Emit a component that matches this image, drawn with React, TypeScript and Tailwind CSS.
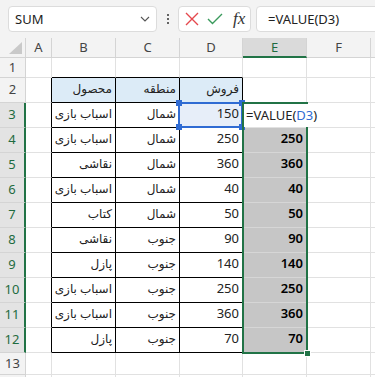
import React from "react";

const COLS = ["A", "B", "C", "D", "E", "F", "G"];

const rows: string[][] = [
  ["", "", "", "", "", ""],
  ["", "محصول", "منطقه", "فروش", "", ""],
  ["", "اسباب بازی", "شمال", "150", "", ""],
  ["", "اسباب بازی", "شمال", "250", "250", ""],
  ["", "نقاشی", "شمال", "360", "360", ""],
  ["", "اسباب بازی", "شمال", "40", "40", ""],
  ["", "کتاب", "شمال", "50", "50", ""],
  ["", "نقاشی", "جنوب", "90", "90", ""],
  ["", "پازل", "جنوب", "140", "140", ""],
  ["", "اسباب بازی", "جنوب", "250", "250", ""],
  ["", "اسباب بازی", "جنوب", "360", "360", ""],
  ["", "پازل", "جنوب", "70", "70", ""],
  ["", "", "", "", "", ""],
  ["", "", "", "", "", ""],
];

function cellClass(r: number, c: number): string {
  const inTable = r >= 2 && r <= 12 && c >= 1 && c <= 3;
  const persian = c === 1 || c === 2 || (r === 2 && c === 3);
  const classes: string[] = [
    "flex items-start justify-end pr-[3px] whitespace-nowrap leading-[20px] text-[#222]",
    "font-['Noto_Sans','DejaVu_Sans',sans-serif]",
    "border-r border-b",
  ];
  classes.push(persian ? "text-[12px] pt-[1px]" : "text-[13px]");
  if (inTable || (c === 0 && r >= 2 && r <= 12)) classes.push("border-r-black");
  else classes.push("border-r-[#e1e1e1]");
  if (inTable || (r === 1 && c >= 1 && c <= 3)) classes.push("border-b-black");
  else if (c === 4 && r >= 4 && r <= 11) classes.push("border-b-[#d6d6d6]");
  else classes.push("border-b-[#e1e1e1]");
  if (r === 2 && inTable) classes.push("bg-[#dcebf7]");
  else if (r === 3 && c === 3) classes.push("bg-[#e7eef9]");
  else if (c === 4 && r >= 4 && r <= 12) classes.push("bg-[#c6c6c6] text-black font-semibold");
  else classes.push("bg-white");
  return classes.join(" ");
}

export default function App() {
  return (
    <div className="w-[375px] h-[377px] overflow-hidden bg-[#f3f3f3] font-['Noto_Sans',sans-serif]">
      {/* Formula bar */}
      <div className="h-[38px] flex items-start pt-[6px] pl-[8px]">
        <div className="w-[149px] h-[26px] bg-white border border-[#dcdcdc] rounded-[4px] flex items-center pl-[6px] pr-[5px]">
          <span className="text-[13px] text-[#222] flex-1 leading-none">SUM</span>
          <svg width="10" height="6" viewBox="0 0 10 6" className="mr-[1px]">
            <path d="M1 1 L5 5 L9 1" fill="none" stroke="#555" strokeWidth="1.1" />
          </svg>
        </div>
        <div className="w-[21px] h-[26px] flex flex-col items-center justify-center gap-[2px]">
          <span className="w-[2px] h-[2px] rounded-full bg-[#333]" />
          <span className="w-[2px] h-[2px] rounded-full bg-[#333]" />
          <span className="w-[2px] h-[2px] rounded-full bg-[#333]" />
        </div>
        <div className="w-[73px] h-[26px] bg-white border border-[#dcdcdc] rounded-[4px] flex items-center pl-[5px]">
          <svg width="14" height="14" viewBox="0 0 14 14" className="ml-[1px]">
            <path d="M1 1 L13 13 M13 1 L1 13" stroke="#e5484d" strokeWidth="1.4" fill="none" />
          </svg>
          <svg width="16" height="12" viewBox="0 0 16 12" className="ml-[8px]">
            <path d="M1 6 L5.5 10.5 L15 1" stroke="#3a9a5c" strokeWidth="1.4" fill="none" />
          </svg>
          <span className="ml-[10px] text-[17px] leading-none italic text-[#333] font-['Liberation_Serif',serif] -mt-[2px]">
            fx
          </span>
        </div>
        <div className="ml-[5px] flex-1 -mr-[10px] h-[26px] bg-white border border-[#dcdcdc] rounded-[4px] flex items-center pl-[11px]">
          <span className="text-[13px] text-[#222] leading-none">=VALUE(D3)</span>
        </div>
      </div>

      {/* Sheet */}
      <div className="relative h-[339px] overflow-hidden">
        <div className="grid w-max grid-cols-[26px_26px_64px_64px_63px_64px_64px_64px] grid-rows-[20px_20px_repeat(11,25px)_22px_22px]">
          <div className="bg-[#f3f3f3] border-r border-b border-[#d4d4d4] flex items-end justify-end pr-[3px] pb-[3px]">
            <svg width="13" height="12" viewBox="0 0 13 12">
              <path d="M13 0 L13 12 L0 12 Z" fill="#c9c9c9" />
            </svg>
          </div>
          {COLS.map((c) =>
            c === "E" ? (
              <div
                key={c}
                className="bg-[#dadada] border-r border-r-[#d4d4d4] border-b-2 border-b-[#217346] flex items-center justify-center text-[13px] text-[#1e6b40] pt-[2px]"
              >
                {c}
              </div>
            ) : (
              <div
                key={c}
                className="bg-[#f3f3f3] border-r border-b border-[#d4d4d4] flex items-center justify-center text-[13px] text-[#444] pt-[1px]"
              >
                {c}
              </div>
            )
          )}
          {rows.map((row, i) => {
            const r = i + 1;
            const sel = r >= 3 && r <= 12;
            return (
              <React.Fragment key={r}>
                {sel ? (
                  <div className="bg-[#e3e3e3] border-r-2 border-r-[#217346] border-b border-b-[#d4d4d4] flex items-center justify-center text-[13px] text-[#1e6b40]">
                    {r}
                  </div>
                ) : (
                  <div className="bg-[#f3f3f3] border-r border-b border-[#d4d4d4] flex items-center justify-center text-[13px] text-[#444]">
                    {r}
                  </div>
                )}
                {[0, 1, 2, 3, 4, 5, 6].map((c) => (
                  <div key={c} className={cellClass(r, c)}>
                    {c >= 1 && c <= 4 ? row[c] : ""}
                  </div>
                ))}
              </React.Fragment>
            );
          })}
        </div>

        {/* D3 reference highlight */}
        <div className="absolute left-[178px] top-[64px] w-[65px] h-[26px] border-2 border-[#2f6bd3] pointer-events-none" />
        <div className="absolute left-[176px] top-[62px] w-[6px] h-[6px] bg-[#2f6bd3]" />
        <div className="absolute left-[239px] top-[62px] w-[6px] h-[6px] bg-[#2f6bd3]" />
        <div className="absolute left-[176px] top-[86px] w-[6px] h-[6px] bg-[#2f6bd3]" />
        <div className="absolute left-[239px] top-[86px] w-[6px] h-[6px] bg-[#2f6bd3]" />

        {/* E3:E12 selection */}
        <div className="absolute left-[242px] top-[64px] w-[66px] h-[252px] border-2 border-[#217346] pointer-events-none" />
        <div className="absolute left-[304px] top-[312px] w-[7px] h-[7px] bg-[#217346] border border-white" />

        {/* In-cell editor */}
        <div className="absolute left-[244px] top-[66px] h-[23px] w-[80px] bg-white flex items-start pl-[2px] pt-[1px] leading-[20px] text-[13px] text-[#222] whitespace-nowrap">
          =VALUE(<span className="text-[#2f6bd3]">D3</span>)
        </div>
      </div>
    </div>
  );
}
